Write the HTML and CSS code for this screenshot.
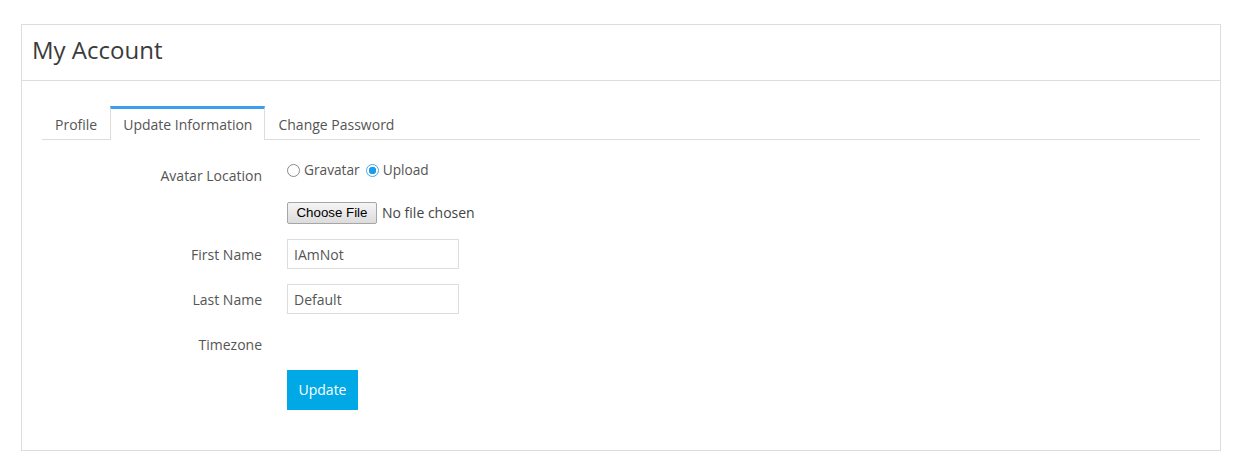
FILE: index.html
```html
<!DOCTYPE html>
<html lang="en">
<head>
<meta charset="utf-8">
<title>My Account</title>
<link rel="stylesheet" href="styles.css">
</head>
<body>
<div class="page">
  <div class="panel">
    <div class="panel-heading">
      <h1 class="panel-title">My Account</h1>
    </div>
    <div class="panel-body">
      <ul class="tabs">
        <li class="tab">Profile</li>
        <li class="tab active">Update Information</li>
        <li class="tab">Change Password</li>
      </ul>
      <form class="form">
        <div class="row row-avatar">
          <label class="label label-radio">Avatar Location</label>
          <div class="radios">
            <label class="radio-item"><input class="radio" type="radio" name="avatar"> Gravatar</label>
            <label class="radio-item"><input class="radio" type="radio" name="avatar" checked> Upload</label>
          </div>
        </div>
        <div class="row row-file">
          <div class="label"></div>
          <div class="file">
            <span class="file-button">Choose File</span>
            <span class="file-text">No file chosen</span>
          </div>
        </div>
        <div class="row row-input">
          <label class="label">First Name</label>
          <div><input class="text-input" type="text" value="IAmNot"></div>
        </div>
        <div class="row row-input">
          <label class="label">Last Name</label>
          <div><input class="text-input" type="text" value="Default"></div>
        </div>
        <div class="row row-tz">
          <label class="label">Timezone</label>
          <div></div>
        </div>
        <div class="row row-submit">
          <div class="label"></div>
          <div><button class="btn" type="button">Update</button></div>
        </div>
      </form>
    </div>
  </div>
</div>
</body>
</html>
```

FILE: styles.css
```css
* { box-sizing: border-box; }

html, body {
  margin: 0;
  padding: 0;
  background: #ffffff;
}

body {
  font-family: "Open Sans", "Liberation Sans", sans-serif;
  font-size: 14px;
  line-height: 20px;
  color: #555555;
}

.page {
  padding: 24px 23px 0 21px;
}

.panel {
  width: 1200px;
  border: 1px solid #dddddd;
  background: #fff;
}

.panel-heading {
  height: 56px;
  border-bottom: 1px solid #dddddd;
  padding: 8px 10px 0 10px;
}

.panel-title {
  margin: 0;
  font-size: 24px;
  font-weight: 400;
  line-height: 34px;
  color: #3b3b3b;
}

.panel-body {
  padding: 25px 20px 20px 20px;
}

.tabs {
  list-style: none;
  margin: 0;
  padding: 0;
  display: flex;
  border-bottom: 1px solid #dddddd;
}

.tab {
  padding: 6px 12px 0 12px;
  border: 1px solid transparent;
  border-top-width: 3px;
  border-bottom: 0;
  margin-bottom: -1px;
  color: #555;
  line-height: 20px;
  height: 34px;
}

.tab.active {
  border-color: #dddddd;
  border-top-color: #3d9def;
  background: #fff;
}

.form {
  padding-top: 20px;
  padding-bottom: 20px;
}

.row {
  display: grid;
  grid-template-columns: 220px 1fr;
  column-gap: 25px;
}

.label {
  text-align: right;
  color: #555;
  padding-top: 6px;
}

.label-radio { padding-top: 6px; }

.row-avatar { height: 20px; }

.radios {
  display: flex;
  align-items: center;
  height: 20px;
  gap: 6px;
}

.radio-item {
  display: inline-flex;
  align-items: center;
  gap: 4px;
  font-size: 13.7px;
  color: #555;
}

.radio {
  appearance: none;
  -webkit-appearance: none;
  width: 13px;
  height: 13px;
  margin: 0;
  border: 1px solid #8a8a8a;
  border-radius: 50%;
  background: #fff;
}

.radio:checked {
  border-color: #4aa6e8;
  background: radial-gradient(circle, #1c9be6 0, #1c9be6 3.5px, #ffffff 4px);
}

.row-file {
  margin-top: 22px;
  height: 22px;
}

.file {
  display: flex;
  align-items: center;
  height: 22px;
}

.file-button {
  display: inline-block;
  width: 90px;
  height: 22px;
  line-height: 20px;
  text-align: center;
  font-family: "Liberation Sans", Arial, sans-serif;
  font-size: 13.3px;
  color: #000;
  background: linear-gradient(#f5f5f5, #dcdcdc);
  border: 1px solid #a6a6a6;
  border-radius: 2px;
  margin-right: 5px;
}

.file-text {
  color: #444;
}

.row-input {
  margin-top: 15px;
  height: 30px;
}

.text-input {
  width: 172px;
  height: 30px;
  border: 1px solid #dddddd;
  padding: 0 6px;
  font-family: "Open Sans", "Liberation Sans", sans-serif;
  font-size: 14px;
  color: #555;
  background: #fff;
  outline: none;
}

.row-tz {
  margin-top: 15px;
  height: 26px;
}

.row-submit {
  margin-top: 15px;
}

.btn {
  width: 71px;
  height: 40px;
  border: 0;
  border-radius: 0;
  background: #00a8e6;
  color: #fff;
  font-family: "Open Sans", "Liberation Sans", sans-serif;
  font-size: 14px;
  line-height: 20px;
  padding: 0 0 1px 0;
  display: block;
}
```
